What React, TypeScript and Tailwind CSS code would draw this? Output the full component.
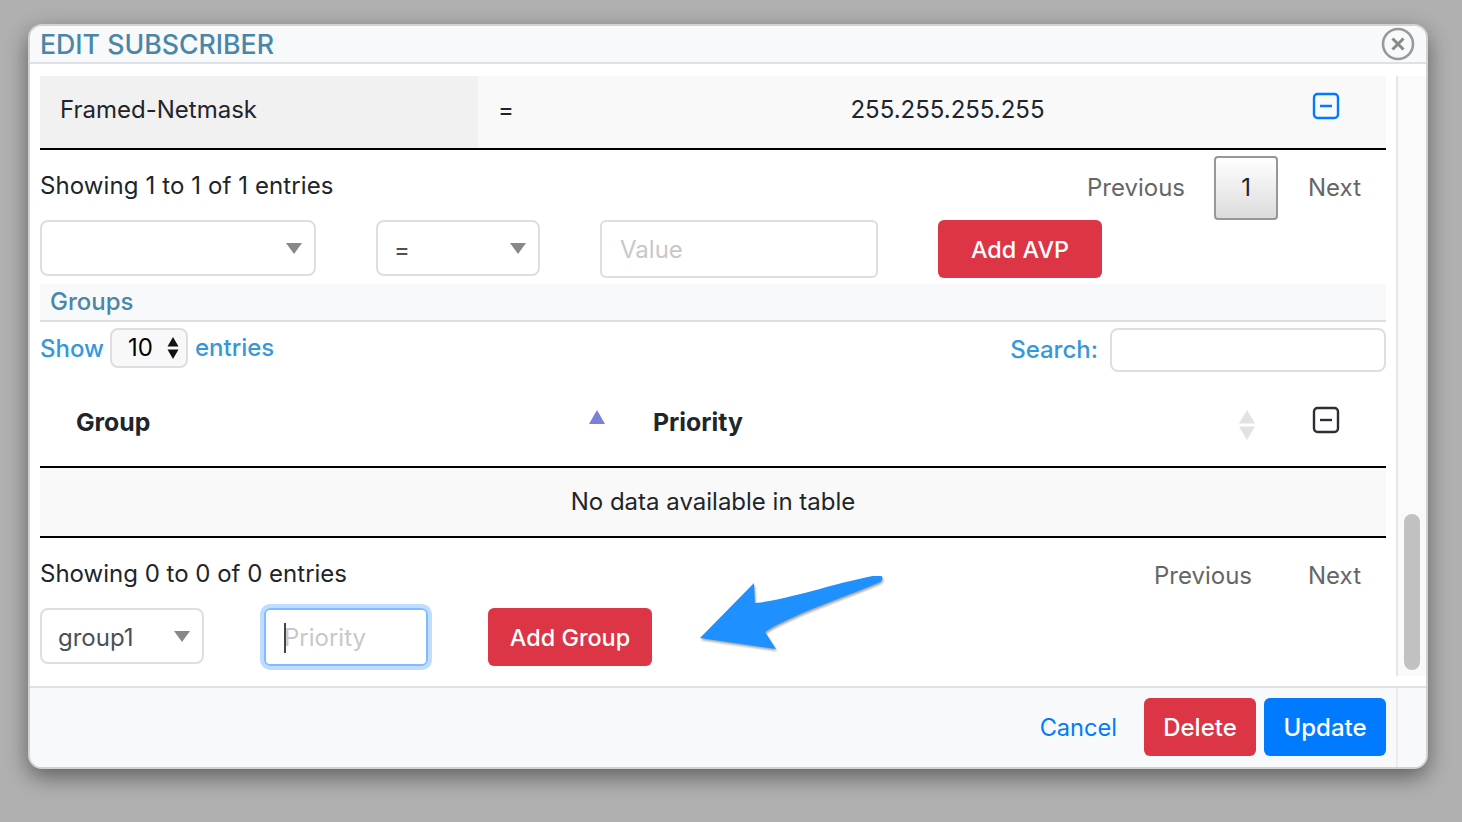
import React from 'react';

function MinusBox({ className }: { className: string }) {
  return (
    <svg width="28" height="28" viewBox="0 0 28 28" fill="none" className={className}>
      <rect x="2" y="2" width="24" height="24" rx="3.5" stroke="currentColor" strokeWidth="2.4" />
      <path d="M8 14h12" stroke="currentColor" strokeWidth="2.4" />
    </svg>
  );
}

function Caret() {
  return (
    <svg width="16" height="11" viewBox="0 0 16 11" className="shrink-0">
      <path d="M0 0h16L8 11z" fill="#888888" />
    </svg>
  );
}

function FakeSelect({ value, className }: { value?: string; className: string }) {
  return (
    <div className={`h-[56px] border-2 border-[#dedede] rounded-lg bg-white flex items-center justify-between pr-[12px] text-[#495057] ${className}`}>
      <span className="pt-[3px]">{value}</span>
      <Caret />
    </div>
  );
}

function RedButton({ label, className }: { label: string; className: string }) {
  return (
    <button className={`h-[58px] pt-[2px] bg-[#dc3545] text-white text-[23.4px] rounded-md font-medium ${className}`}>{label}</button>
  );
}

export default function App() {
  return (
    <div className="min-h-[822px] bg-[#b0b0b0] pt-[24px] pl-[28px] overflow-hidden font-['Inter',sans-serif] text-[24px] text-[#212529]">
      <div className="relative w-[1400px] h-[745px] flex flex-col bg-white border-2 border-[#d2d2d2] rounded-[14px] overflow-hidden shadow-[0_8px_22px_rgba(0,0,0,0.45)]">
        <div className="h-[38px] shrink-0 flex items-center justify-between bg-[#f8f9fa] border-b-2 border-[#dee2e6] pl-[10px] pr-[11px]">
          <span className="text-[#4a86a8] text-[26.7px] font-medium">EDIT SUBSCRIBER</span>
          <svg width="34" height="34" viewBox="0 0 34 34" fill="none" className="-mt-[1px]">
            <circle cx="17" cy="17" r="15" stroke="#999999" strokeWidth="2.6" />
            <path d="M11.5 11.5l11 11M22.5 11.5l-11 11" stroke="#888888" strokeWidth="3" />
          </svg>
        </div>

        <div className="flex-1 flex min-h-0">
          <div className="w-[1366px] pl-[10px] pr-[10px] pt-[12px]">
            <div className="h-[74px] flex items-stretch bg-[#f9f9f9] border-b-2 border-black">
              <div className="w-[438px] bg-[#f1f1f1] flex items-center pl-[20px] pb-[4px]">Framed-Netmask</div>
              <div className="w-[182px] flex items-center pl-[20px] pb-[4px]">=</div>
              <div className="w-[575px] flex items-center justify-center pb-[4px]">255.255.255.255</div>
              <div className="flex-1 pl-[77px] pt-[16px]">
                <MinusBox className="text-[#007bff]" />
              </div>
            </div>

            <div className="h-[70px] flex justify-between">
              <span className="pt-[18px] tracking-[0.1px]">Showing 1 to 1 of 1 entries</span>
              <div className="flex items-start pt-[6px] pr-[25px] text-[#666666]">
                <span className="pt-[14px]">Previous</span>
                <span className="ml-[29px] w-[64px] h-[64px] flex items-center justify-center rounded border-2 border-[#979797] bg-linear-to-b from-white to-[#dcdcdc] text-[#212529]">1</span>
                <span className="pt-[14px] ml-[30px]">Next</span>
              </div>
            </div>

            <div className="flex items-start">
              <FakeSelect className="w-[276px]" />
              <FakeSelect value="=" className="ml-[60px] w-[164px] pl-[16px]" />
              <input
                placeholder="Value"
                className="ml-[60px] w-[278px] h-[58px] border-2 border-[#dedede] rounded-md px-[18px] outline-none placeholder:text-[#c8c8c8]"
              />
              <RedButton label="Add AVP" className="ml-[60px] w-[164px]" />
            </div>

            <div className="mt-[6px] h-[38px] flex items-center bg-[#f8f9fa] border-b-2 border-[#dedede] pl-[10px] text-[#4a86a8] font-medium">
              Groups
            </div>

            <div className="mt-[6px] flex justify-between text-[#3498db] font-medium h-[44px]">
              <div className="flex items-start">
                <span className="pt-[3px]">Show</span>
                <div className="ml-[6px] w-[78px] h-[40px] flex items-center justify-between pl-[16px] pr-[7px] rounded-lg border-2 border-[#dedede] bg-[#f8f8f8] text-black font-normal">
                  <span>10</span>
                  <svg width="12" height="24" viewBox="0 0 12 24" className="text-[#111111]">
                    <path d="M6 1l5.5 9.5H.5zM6 23l-5.5-9.5h11z" fill="currentColor" />
                  </svg>
                </div>
                <span className="ml-[7px] pt-[2px]">entries</span>
              </div>
              <div className="flex items-start">
                <span className="pt-[4px]">Search:</span>
                <input className="ml-[12px] w-[276px] h-[44px] border-2 border-[#dedede] rounded-lg outline-none" />
              </div>
            </div>

            <div className="h-[96px] pt-[8px] flex items-center border-b-2 border-black font-bold text-[#212529] text-[24.8px]">
              <span className="w-[549px] pl-[36px]">Group</span>
              <svg width="16" height="14" viewBox="0 0 16 14" className="-mt-[12px] shrink-0">
                <path d="M8 0l8 14H0z" fill="#7b7fdc" />
              </svg>
              <span className="ml-[48px] w-[586px]">Priority</span>
              <svg width="16" height="30" viewBox="0 0 16 30" className="mt-[4px] shrink-0">
                <path d="M8 0l8 13.5H0zM8 30l-8-13.5h16z" fill="#e2e2e2" />
              </svg>
              <MinusBox className="ml-[57px] -mt-[6px] text-[#2b2f33]" />
            </div>

            <div className="h-[70px] flex items-center justify-center bg-[#f9f9f9] border-b-2 border-black">
              No data available in table
            </div>

            <div className="h-[70px] flex justify-between">
              <span className="pt-[18px]">Showing 0 to 0 of 0 entries</span>
              <div className="flex items-start pt-[20px] pr-[25px] text-[#666666]">
                <span>Previous</span>
                <span className="ml-[56px]">Next</span>
              </div>
            </div>

            <div className="flex items-start">
              <FakeSelect value="group1" className="w-[164px] pl-[16px]" />
              <div className="relative ml-[60px]">
                <input
                  placeholder="Priority"
                  className="w-[164px] h-[58px] border-2 border-[#80bdff] rounded-md pl-[18px] outline-none shadow-[0_0_0_4px_rgba(0,123,255,0.25)] placeholder:text-[#c8c8c8]"
                />
                <span className="absolute left-[20px] top-[15px] w-[2px] h-[30px] bg-[#444444]" />
              </div>
              <RedButton label="Add Group" className="ml-[60px] w-[164px]" />
            </div>
          </div>

          <div className="flex-1 mt-[12px] mb-[10px] bg-[#fafafa] border-l-2 border-[#e6e6e6] pl-[6px] pr-[6px] flex flex-col justify-end">
            <div className="w-[16px] h-[156px] mb-[6px] rounded-full bg-[#c1c1c1]" />
          </div>
        </div>

        <div className="h-[81px] shrink-0 flex bg-[#f8f9fa] border-t-2 border-[#dee2e6]">
          <div className="w-[1366px] pr-[10px] pt-[10px] flex items-start justify-end">
            <span className="h-[58px] pt-[2px] flex items-center text-[#007bff] text-[23.6px]">Cancel</span>
            <button className="ml-[27px] w-[112px] h-[58px] pt-[2px] bg-[#dc3545] text-white rounded-md font-medium">Delete</button>
            <button className="ml-[8px] w-[122px] h-[58px] pt-[2px] bg-[#007bff] text-white rounded-md font-medium">Update</button>
          </div>
          <div className="flex-1 border-l-2 border-[#ececec]" />
        </div>

        <svg width="190" height="80" viewBox="0 0 190 80" className="absolute left-[668px] top-[550px] drop-shadow-[1px_2px_1px_rgba(0,0,0,0.35)]">
          <path d="M2 62L56 7L57 27C90 24 140 6 180 -1C185 -1 186 3 182 6C150 20 90 40 67 56L78 73Z" fill="#1e90ff" />
        </svg>
      </div>
    </div>
  );
}
